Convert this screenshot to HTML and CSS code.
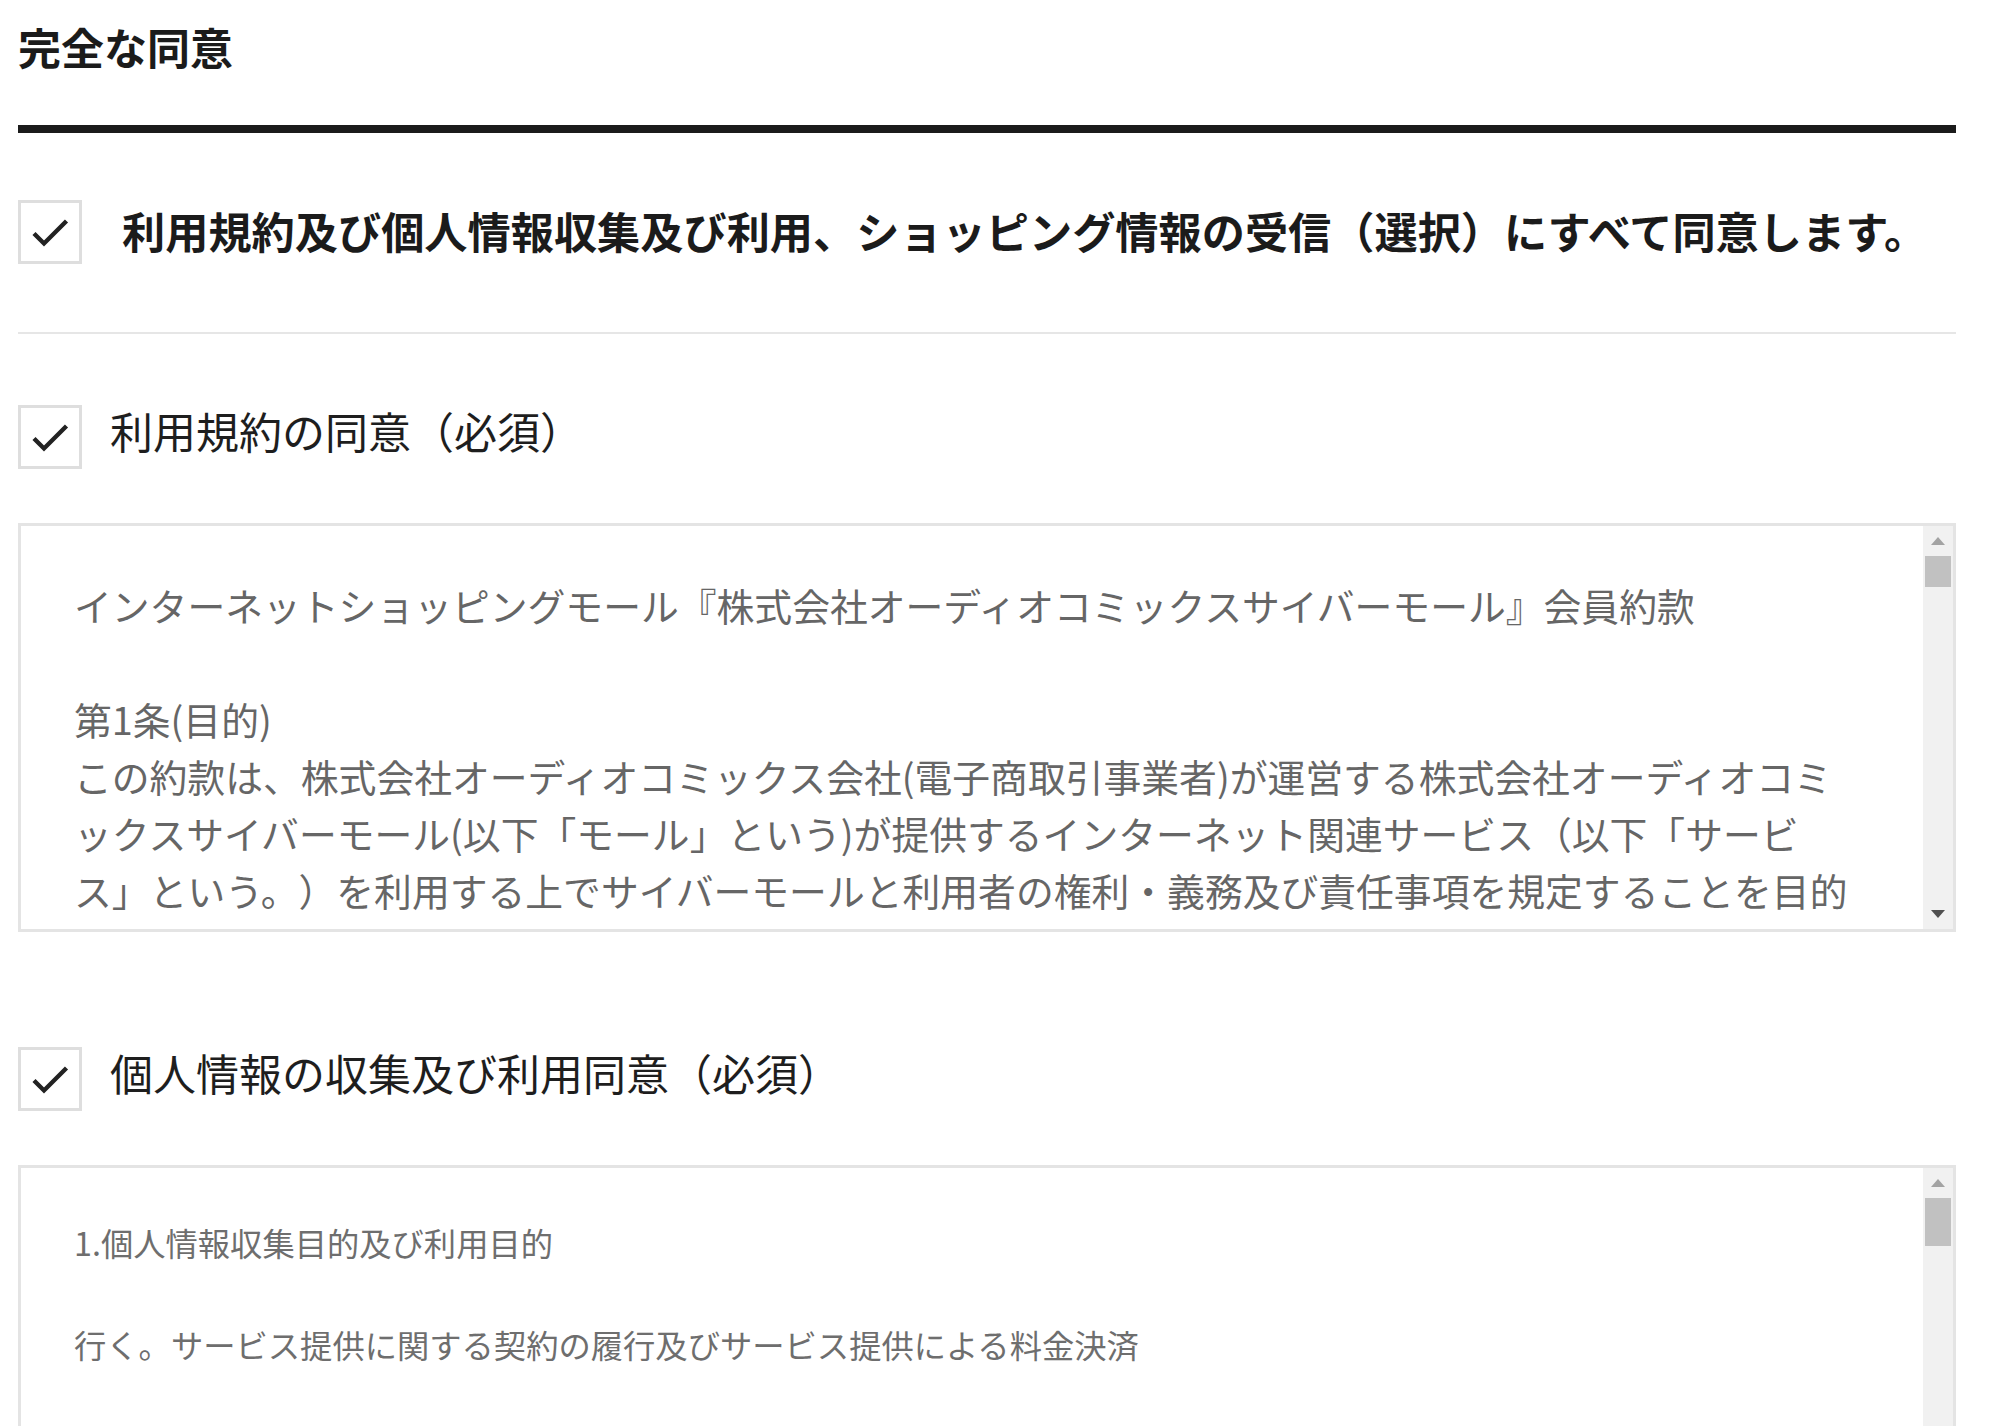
FILE: index.html
```html
<!DOCTYPE html>
<html lang="ja">
<head>
<meta charset="utf-8">
<title>完全な同意</title>
<link rel="stylesheet" href="styles.css">
</head>
<body>
<div class="page">
  <header class="header">
    <h2 class="title">完全な同意</h2>
  </header>

  <div class="all-row">
    <span class="check">
      <svg class="check-icon" width="58" height="58" viewBox="0 0 58 58"><polyline points="13,30.5 23,40.5 45.5,18" fill="none" stroke="#222" stroke-width="4.4"/></svg>
    </span>
    <span class="all-label">利用規約及び個人情報収集及び利用、ショッピング情報の受信（選択）にすべて同意します。</span>
  </div>

  <section class="section section--terms">
    <div class="agree-row">
      <span class="check">
        <svg class="check-icon" width="58" height="58" viewBox="0 0 58 58"><polyline points="13,30.5 23,40.5 45.5,18" fill="none" stroke="#222" stroke-width="4.4"/></svg>
      </span>
      <span class="agree-label">利用規約の同意（必須）</span>
    </div>
    <div class="terms-box">
      <div class="terms-text">
        <p class="para-gap">インターネットショッピングモール『株式会社オーディオコミックスサイバーモール』会員約款</p>
        <p>第1条(目的)</p>
        <p>この約款は、株式会社オーディオコミックス会社(電子商取引事業者)が運営する株式会社オーディオコミックスサイバーモール(以下「モール」という)が提供するインターネット関連サービス（以下「サービス」という。）を利用する上でサイバーモールと利用者の権利・義務及び責任事項を規定することを目的とします。</p>
      </div>
      <div class="scrollbar">
        <div class="sb-btn"><span class="arrow-up"></span></div>
        <div class="thumb"></div>
        <div class="sb-track"></div>
        <div class="sb-btn"><span class="arrow-down"></span></div>
      </div>
    </div>
  </section>

  <section class="section section--privacy">
    <div class="agree-row">
      <span class="check">
        <svg class="check-icon" width="58" height="58" viewBox="0 0 58 58"><polyline points="13,30.5 23,40.5 45.5,18" fill="none" stroke="#222" stroke-width="4.4"/></svg>
      </span>
      <span class="agree-label">個人情報の収集及び利用同意（必須）</span>
    </div>
    <div class="terms-box">
      <div class="terms-text terms-text--small">
        <p class="para-gap">1.個人情報収集目的及び利用目的</p>
        <p class="para-gap">行く。サービス提供に関する契約の履行及びサービス提供による料金決済</p>
        <p>コンテンツ提供、購入及び料金決済、物品配送または請求書などの発送</p>
      </div>
      <div class="scrollbar">
        <div class="sb-btn"><span class="arrow-up"></span></div>
        <div class="thumb thumb--tall"></div>
        <div class="sb-track"></div>
        <div class="sb-btn"><span class="arrow-down"></span></div>
      </div>
    </div>
  </section>
</div>
</body>
</html>
```

FILE: styles.css
```css
html, body {
  margin: 0;
  padding: 0;
  background: #ffffff;
}

body {
  font-family: "Noto Sans CJK JP", "Noto Sans", sans-serif;
  color: #1e1e1e;
  text-spacing-trim: space-all;
}

.page {
  padding: 0 44px 0 18px;
}

.header {
  padding: 16px 0 49px;
  border-bottom: 8px solid #1b1b1b;
}

.title {
  margin: 0;
  font-size: 43px;
  line-height: 60px;
  font-weight: 700;
  color: #1b1b1b;
}

.all-row {
  display: flex;
  align-items: center;
  gap: 40px;
  padding: 67px 0 68px;
  border-bottom: 2px solid #e6e6e6;
}

.all-label {
  font-size: 43.2px;
  line-height: 60px;
  font-weight: 700;
  color: #1b1b1b;
  white-space: nowrap;
  margin-top: -5px;
}

.check {
  flex: none;
  display: block;
  width: 64px;
  height: 64px;
  box-sizing: border-box;
  border: 3px solid #dedede;
  background: #fff;
}

.check-icon {
  display: block;
}

.section--terms {
  margin-top: 71px;
}

.section--privacy {
  margin-top: 115px;
}

.agree-row {
  display: flex;
  align-items: center;
  gap: 28px;
}

.agree-label {
  font-size: 43px;
  line-height: 60px;
  font-weight: 400;
  color: #1e1e1e;
  margin-top: -14px;
}

.terms-box {
  display: flex;
  height: 409px;
  box-sizing: border-box;
  border: 3px solid #e4e4e4;
  margin-top: 54px;
  background: #fff;
}

.terms-text {
  flex: 1;
  min-width: 0;
  overflow: hidden;
  padding: 50px 61px 0 53px;
  font-size: 37.8px;
  line-height: 57px;
  color: #666666;
}

.terms-text p {
  margin: 0;
}

.terms-text .para-gap {
  margin-bottom: 57px;
}

.terms-text--small {
  padding-top: 49px;
  font-size: 32.3px;
  line-height: 51px;
  color: #6e6e6e;
}

.terms-text--small .para-gap {
  margin-bottom: 51px;
}

.scrollbar {
  flex: none;
  width: 30px;
  background: #f1f1f1;
  display: flex;
  flex-direction: column;
  align-items: center;
}

.sb-btn {
  flex: none;
  width: 30px;
  height: 30px;
  display: flex;
  align-items: center;
  justify-content: center;
}

.arrow-up {
  width: 0;
  height: 0;
  border-left: 7.5px solid transparent;
  border-right: 7.5px solid transparent;
  border-bottom: 8px solid #a3a3a3;
}

.arrow-down {
  width: 0;
  height: 0;
  border-left: 7px solid transparent;
  border-right: 7px solid transparent;
  border-top: 8px solid #505050;
}

.thumb {
  flex: none;
  width: 26px;
  height: 31px;
  background: #c1c1c1;
}

.thumb--tall {
  height: 48px;
}

.sb-track {
  flex: 1;
}
```
